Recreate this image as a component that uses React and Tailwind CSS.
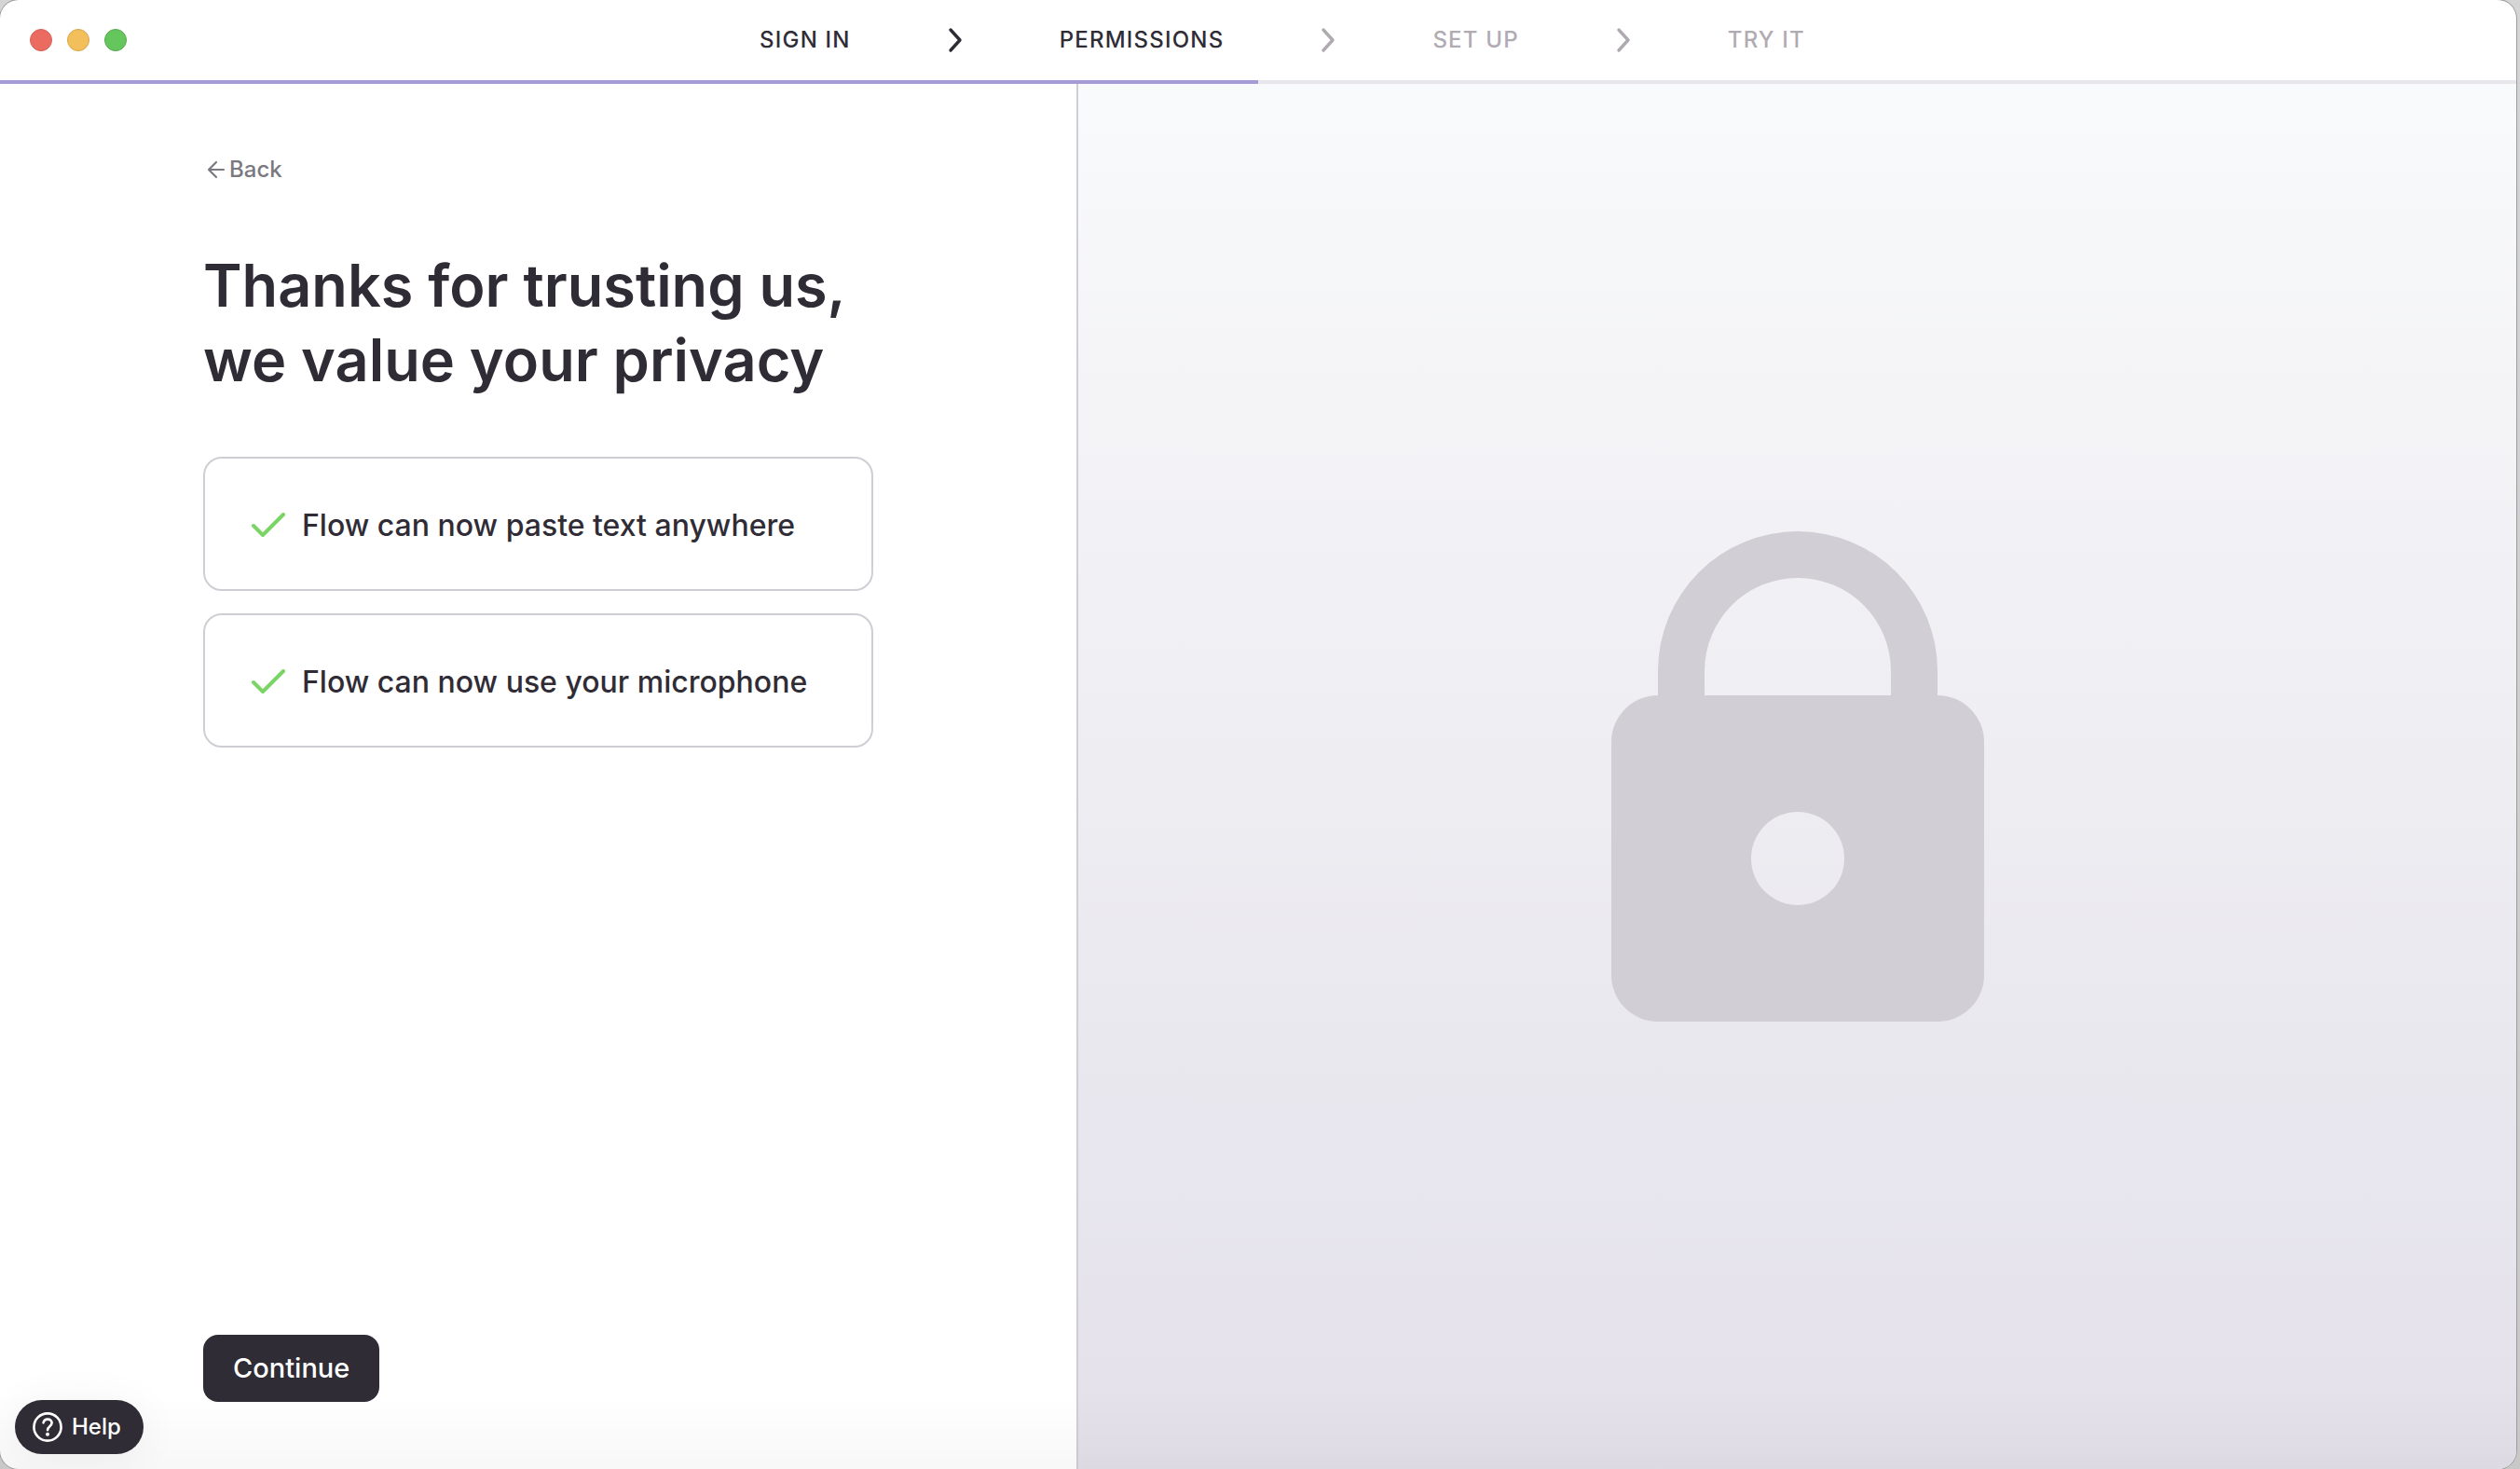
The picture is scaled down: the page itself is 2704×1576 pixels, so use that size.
import { Fragment } from "react";

const steps = [
  { label: "SIGN IN", reached: true },
  { label: "PERMISSIONS", reached: true },
  { label: "SET UP", reached: false },
  { label: "TRY IT", reached: false },
];

const grants = ["Flow can now paste text anywhere", "Flow can now use your microphone"];

function Chevron() {
  return (
    <svg viewBox="0 0 32 32" className="size-8 shrink-0" fill="none" stroke="currentColor" strokeWidth="3.4" strokeLinecap="round" strokeLinejoin="round" aria-hidden="true">
      <path d="M11 5l10 11-10 11" />
    </svg>
  );
}

function ArrowLeft() {
  return (
    <svg viewBox="0 0 20 20" className="size-5 shrink-0" fill="none" stroke="currentColor" strokeWidth="2.2" strokeLinecap="round" strokeLinejoin="round" aria-hidden="true">
      <path d="M18 10H2M10 2l-8 8 8 8" />
    </svg>
  );
}

function Check() {
  return (
    <svg viewBox="0 0 38 28" className="h-7 w-[38px] shrink-0" fill="none" stroke="#7bd566" strokeWidth="4" strokeLinecap="round" strokeLinejoin="round" aria-hidden="true">
      <path d="M2 14l10 10L34 2" />
    </svg>
  );
}

function QuestionCircle() {
  return (
    <svg viewBox="0 0 32 32" className="size-8 shrink-0" fill="none" stroke="currentColor" strokeLinecap="round" strokeLinejoin="round" aria-hidden="true">
      <circle cx="16" cy="16" r="14.6" strokeWidth="2.6" />
      <path d="M11.6 11.4C12 9 13.8 7.6 16.1 7.6c2.6 0 4.5 1.6 4.5 4 0 3.6-4.5 3.8-4.5 7.6" strokeWidth="2.6" />
      <circle cx="16" cy="23.8" r="2" fill="currentColor" stroke="none" />
    </svg>
  );
}

function Padlock() {
  return (
    <svg viewBox="0 0 400 526" className="w-[400px]" fill="#d1ced5" role="img" aria-label="Padlock">
      <path
        fillRule="evenodd"
        d="M50 176V150a150 150 0 0 1 300 0v26a50 50 0 0 1 50 50v250a50 50 0 0 1-50 50H50a50 50 0 0 1-50-50V226a50 50 0 0 1 50-50zM100 176h200V150a100 100 0 0 0-200 0zM200 301a50 50 0 1 0 0 100a50 50 0 1 0 0-100z"
      />
    </svg>
  );
}

export default function App() {
  return (
    <div className="flex min-h-screen bg-linear-to-b from-[#d5d5d5] to-[#c8c8c8] pr-1 font-['Inter',sans-serif] text-[#2f2c36]">
      <div className="relative flex flex-1 flex-col overflow-hidden rounded-[20px] bg-white shadow-[0_0_0_1px_#9c9c9c]">
        <header>
          <div className="flex h-[86px] items-center">
            <div className="flex flex-1 gap-4 pl-8">
              <button type="button" aria-label="Close" className="size-6 rounded-full border border-[#d3605a] bg-[#ec6b60]" />
              <button type="button" aria-label="Minimize" className="size-6 rounded-full border border-[#d6a54c] bg-[#f3bf5a]" />
              <button type="button" aria-label="Zoom" className="size-6 rounded-full border border-[#55a84b] bg-[#66c65e]" />
            </div>
            <nav aria-label="Setup steps" className="flex items-center gap-24 pl-5 text-2xl leading-8 font-medium tracking-wider">
              {steps.map((step, i) => (
                <Fragment key={step.label}>
                  {i > 0 && (
                    <span className={i === 1 ? "text-[#2f2c36]" : "text-[#aeaab0]"}>
                      <Chevron />
                    </span>
                  )}
                  <span className={step.reached ? "whitespace-nowrap text-[#2f2c36]" : "whitespace-nowrap text-[#b0abb3]"}>{step.label}</span>
                </Fragment>
              ))}
            </nav>
            <div className="flex-1" />
          </div>
          <div className="h-1 bg-[#e9e6eb]">
            <div className="h-full w-1/2 bg-[#a79bd5]" />
          </div>
        </header>

        <main className="flex flex-1">
          <section className="flex basis-3/7 flex-col items-start border-r-2 border-[#cfced5] px-[218px] pt-[76px] pb-[72px]">
            <button type="button" className="flex items-center gap-1 pl-1 text-2xl leading-8 font-medium text-[#7b7980]">
              <ArrowLeft />
              Back
            </button>
            <h1 className="mt-[68px] text-[63px] leading-[80px] font-semibold whitespace-nowrap">
              Thanks for trusting us,
              <br />
              we value your privacy
            </h1>
            <ul className="mt-16 flex w-full flex-col gap-6">
              {grants.map((text) => (
                <li key={text} className="flex h-36 items-center gap-4 rounded-[20px] border-2 border-[#cfced5] pt-1 pl-[50px] text-[32px] leading-10 font-medium whitespace-nowrap">
                  <Check />
                  {text}
                </li>
              ))}
            </ul>
            <button type="button" className="mt-auto h-[72px] rounded-2xl bg-[#2f2c36] px-8 text-[29px] leading-10 font-medium text-white">
              Continue
            </button>
          </section>
          <section className="flex flex-1 items-center justify-center bg-linear-to-b from-[#f9fafb] via-[#eeedf2] to-[#e3e0ea]">
            <Padlock />
          </section>
        </main>

        <div className="pointer-events-none absolute inset-x-0 bottom-0 h-20 bg-linear-to-t from-black/3 to-transparent" />
        <button
          type="button"
          className="absolute bottom-4 left-4 flex h-[58px] items-center gap-2.5 rounded-full bg-[#2f2c36] pr-6 pl-[19px] text-2xl leading-8 font-medium text-white shadow-[0_4px_48px_rgba(0,0,0,0.06)]"
        >
          <QuestionCircle />
          Help
        </button>
      </div>
    </div>
  );
}
